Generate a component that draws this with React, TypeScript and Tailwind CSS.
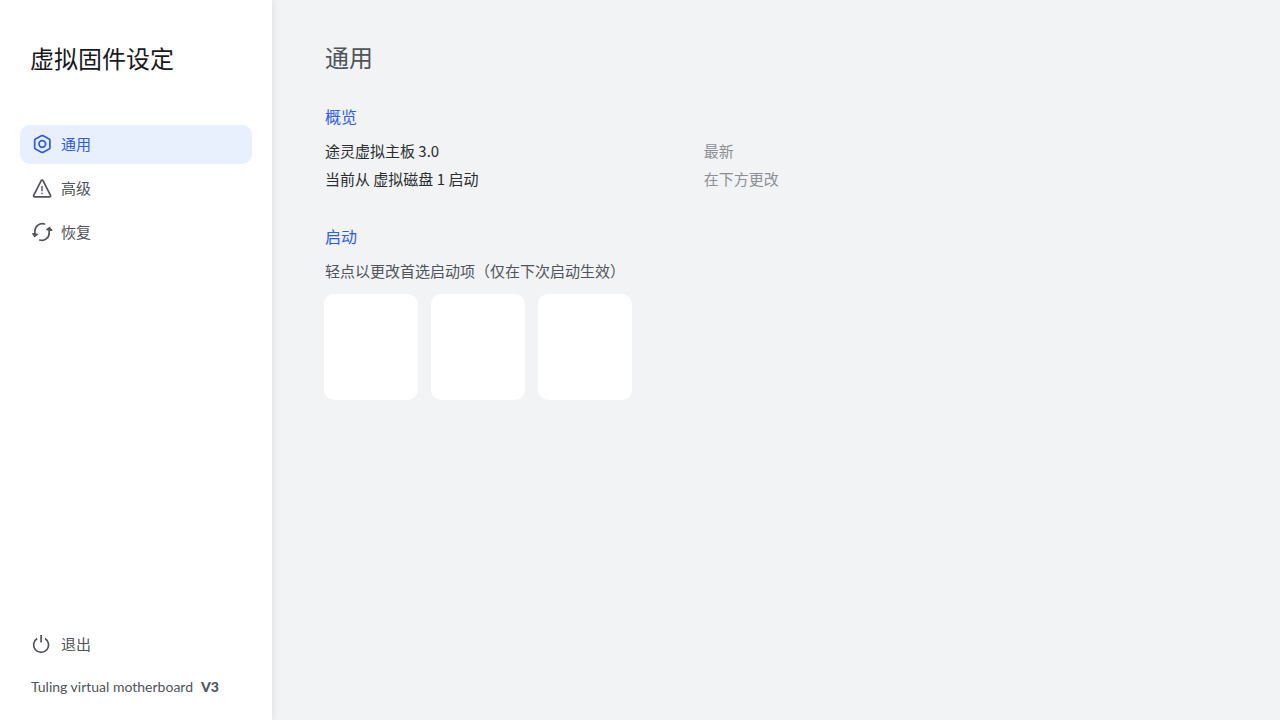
import type { ReactNode } from 'react';

type NavItem = {
  label: string;
  icon: ReactNode;
  active?: boolean;
};

const overview = [
  { label: '途灵虚拟主板 3.0', value: '最新' },
  { label: '当前从 虚拟磁盘 1 启动', value: '在下方更改' },
];

const bootOptions = ['启动项 1', '启动项 2', '启动项 3'];

function Icon({ children }: { children: ReactNode }) {
  return (
    <svg
      viewBox="0 0 22 22"
      className="size-[22px] shrink-0 overflow-visible"
      fill="none"
      stroke="currentColor"
      strokeWidth="1.7"
      strokeLinecap="round"
      strokeLinejoin="round"
      aria-hidden="true"
    >
      {children}
    </svg>
  );
}

const navItems: NavItem[] = [
  {
    label: '通用',
    active: true,
    icon: (
      <Icon>
        <path d="M10.4 2.8 4.5 6c-.5.3-.8.7-.8 1.3v7.4c0 .6.3 1 .8 1.3l5.9 3.2c.6.3 1.2.3 1.8 0l5.9-3.2c.5-.3.8-.7.8-1.3V7.3c0-.6-.3-1-.8-1.3l-5.9-3.2c-.6-.3-1.200-.3-1.800 0Z" />
        <circle cx="11.3" cy="11" r="3.3" />
      </Icon>
    ),
  },
  {
    label: '高级',
    icon: (
      <Icon>
        <path d="M10.200 3.700 2.700 18.300c-.4.800.1 1.600 1 1.600h14.800c.9 0 1.400-.8 1-1.600L12 3.700c-.4-.7-1.400-.7-1.800 0Z" />
        <path d="M11 9v5.300M11 15.800v1.500" strokeWidth="1.4" strokeLinecap="butt" />
      </Icon>
    ),
  },
  {
    label: '恢复',
    icon: (
      <Icon>
        <path d="M13.500 3C8.700 1.700 3.900 4.800 3.900 10.300v2.400" />
        <path d="m1.700 12.600 4.900.7-2.900 2.300Z" fill="currentColor" strokeWidth="1.2" />
        <path d="M8.700 19c4.800 1.300 9.500-1.900 9.500-7.300V9.300" />
        <path d="m20.800 9.400-5.200-.7 2.900-2.300Z" fill="currentColor" strokeWidth="1.2" />
      </Icon>
    ),
  },
];

function NavButton({ label, icon, active }: NavItem) {
  return (
    <button
      type="button"
      aria-current={active ? 'page' : undefined}
      className={`flex w-full items-center gap-2 rounded-[10px] px-[11px] pt-[7px] pb-[9px] text-left text-[15px] leading-[23px] ${
        active ? 'bg-[#e8effd] text-[#2d5bef]' : 'text-[#505358]'
      }`}
    >
      {icon}
      {label}
    </button>
  );
}

function Sidebar() {
  return (
    <aside className="relative flex w-68 shrink-0 flex-col bg-white px-5 shadow-[0_0_8px_rgba(0,0,0,0.1)]">
      <h1 className="mt-[42px] px-[10px] text-2xl text-[#18191b]">虚拟固件设定</h1>
      <nav className="mt-[51px] flex flex-col gap-[5px]">
        {navItems.map((item) => (
          <NavButton key={item.label} {...item} />
        ))}
      </nav>
      <div className="mt-auto">
        <NavButton
          label="退出"
          icon={
            <Icon>
              <path d="M6.200 5.500a7.500 7.500 0 1 0 7.800 0" strokeLinecap="butt" />
              <path d="M10.100 2v7.500" strokeLinecap="butt" />
            </Icon>
          }
        />
      </div>
      <p className="mt-[13px] mb-[23px] flex gap-2 px-[11px] font-['Lato','Noto_Sans_CJK_SC',sans-serif] text-sm text-[#505358]">
        Tuling virtual motherboard
        <strong className="font-black">V3</strong>
      </p>
    </aside>
  );
}

export default function App() {
  return (
    <div className="flex min-h-screen bg-[#f1f3f5] font-['Noto_Sans_CJK_SC',sans-serif]">
      <Sidebar />
      <main className="min-w-0 flex-1 pt-[41px] pr-2 pl-[53px] text-[15px] leading-7">
        <h2 className="text-2xl text-[#505358]">通用</h2>

        <section className="mt-[29px]">
          <h3 className="text-base leading-7 text-[#2d5bef]">概览</h3>
          <dl className="mt-[7px]">
            {overview.map((row) => (
              <div key={row.label} className="grid grid-cols-[2fr_3fr]">
                <dt className="text-[#2b2c2f]">{row.label}</dt>
                <dd className="text-[#8c8f94]">{row.value}</dd>
              </div>
            ))}
          </dl>
        </section>

        <section className="mt-[29px]">
          <h3 className="text-base leading-7 text-[#2d5bef]">启动</h3>
          <p className="mt-[7px] text-[#505358]">轻点以更改首选启动项（仅在下次启动生效）</p>
          <div className="-mx-px mt-[9px] flex gap-[13px]">
            {bootOptions.map((name) => (
              <button
                key={name}
                type="button"
                aria-label={name}
                className="h-[106px] w-[94px] rounded-[10px] bg-white"
              />
            ))}
          </div>
        </section>
      </main>
    </div>
  );
}
